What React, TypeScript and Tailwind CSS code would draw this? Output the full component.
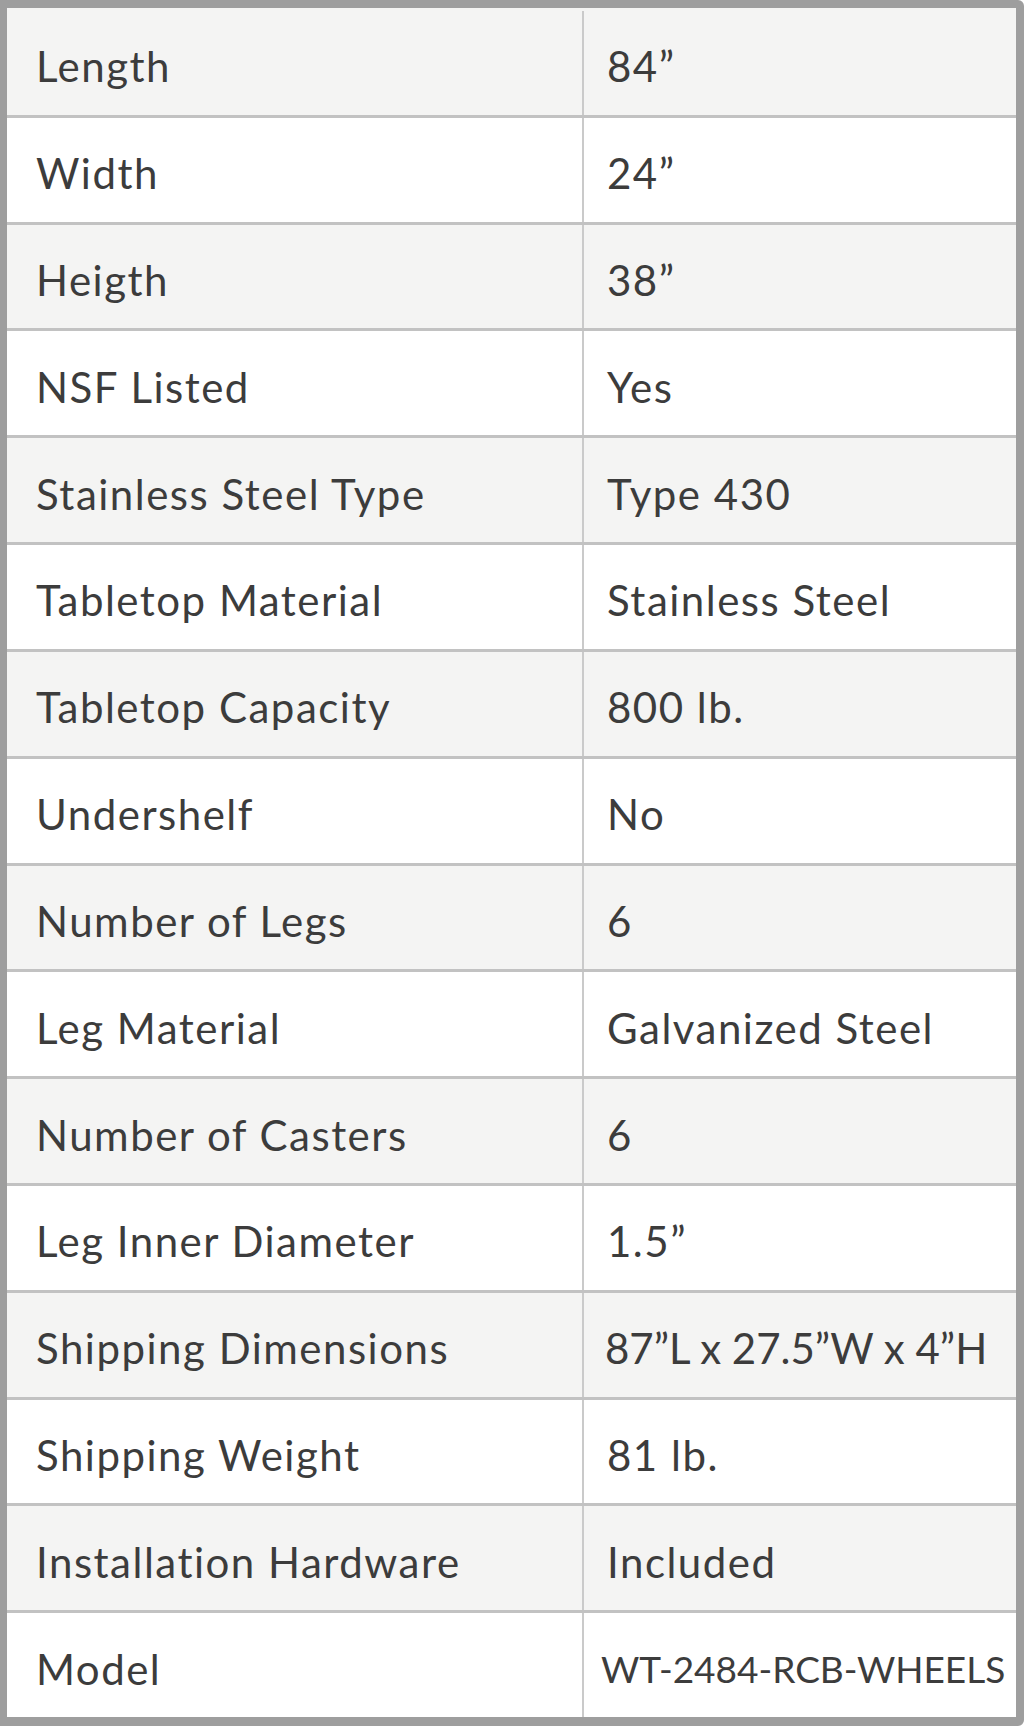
const specs: [string, string][] = [
  ["Length", "84”"],
  ["Width", "24”"],
  ["Heigth", "38”"],
  ["NSF Listed", "Yes"],
  ["Stainless Steel Type", "Type 430"],
  ["Tabletop Material", "Stainless Steel"],
  ["Tabletop Capacity", "800 lb."],
  ["Undershelf", "No"],
  ["Number of Legs", "6"],
  ["Leg Material", "Galvanized Steel"],
  ["Number of Casters", "6"],
  ["Leg Inner Diameter", "1.5”"],
  ["Shipping Dimensions", "87”L x 27.5”W x 4”H"],
  ["Shipping Weight", "81 lb."],
  ["Installation Hardware", "Included"],
  ["Model", "WT-2484-RCB-WHEELS"],
];

export default function App() {
  return (
    <div className="w-[1024px] h-[1726px] bg-white">
      <div
        className="h-full flex flex-col border-[#9e9e9e] border-l-[7px] border-t-[8px] border-r-[8px] border-b-[9px] rounded-tr-[6px] rounded-br-[6px] text-[#3c3c3c] text-[42px] tracking-[1.5px]"
        style={{ fontFamily: "Lato, 'Open Sans', sans-serif" }}
      >
        {specs.map(([label, value], i) => (
          <div
            key={label}
            className={`flex-1 grid grid-cols-[577px_1fr] ${i > 0 ? "border-t-[3px] border-[#c2c2c2]" : ""} ${i === 0 ? "pt-[3px]" : ""} ${i % 2 === 0 ? "bg-[#f4f4f3]" : "bg-white"}`}
          >
            <div className="flex items-center pl-[29px] pt-[8px] border-r-[2px] border-[#cacaca]">{label}</div>
            <div
              className={`flex items-center pt-[8px] whitespace-nowrap ${
                label === "Model"
                  ? "pl-[17px] text-[37px] tracking-[0px]"
                  : label === "Shipping Dimensions"
                  ? "pl-[21px] tracking-[0px]"
                  : "pl-[23px]"
              }`}
            >
              {value}
            </div>
          </div>
        ))}
      </div>
    </div>
  );
}
